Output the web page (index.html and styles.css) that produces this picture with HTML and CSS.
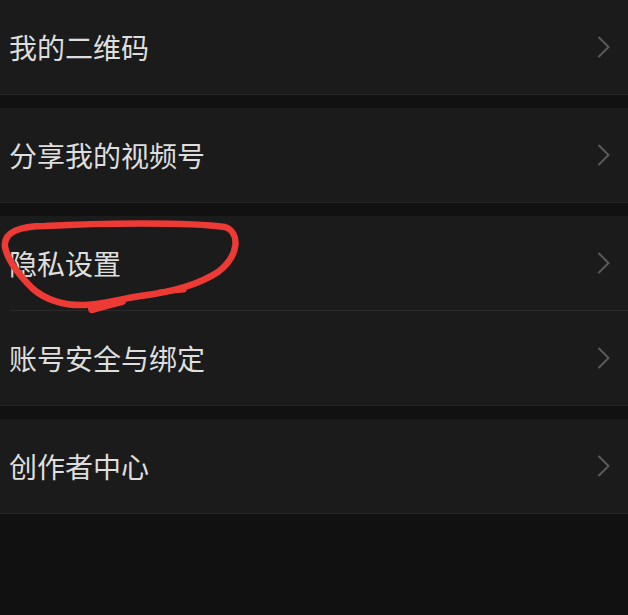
FILE: index.html
```html
<!DOCTYPE html>
<html lang="zh-CN">
<head>
<meta charset="utf-8">
<link rel="stylesheet" href="styles.css">
</head>
<body>
<div class="page">
  <div class="group">
    <div class="row"><span class="label">我的二维码</span><svg class="chev" width="14" height="22" viewBox="0 0 14 22"><path d="M2 1.5 L11.5 11 L2 20.5" /></svg></div>
  </div>
  <div class="group">
    <div class="row"><span class="label">分享我的视频号</span><svg class="chev" width="14" height="22" viewBox="0 0 14 22"><path d="M2 1.5 L11.5 11 L2 20.5" /></svg></div>
  </div>
  <div class="group">
    <div class="row"><span class="label">隐私设置</span><svg class="chev" width="14" height="22" viewBox="0 0 14 22"><path d="M2 1.5 L11.5 11 L2 20.5" /></svg></div>
    <div class="sep"></div>
    <div class="row"><span class="label">账号安全与绑定</span><svg class="chev" width="14" height="22" viewBox="0 0 14 22"><path d="M2 1.5 L11.5 11 L2 20.5" /></svg></div>
  </div>
  <div class="group">
    <div class="row"><span class="label">创作者中心</span><svg class="chev" width="14" height="22" viewBox="0 0 14 22"><path d="M2 1.5 L11.5 11 L2 20.5" /></svg></div>
  </div>
</div>
<svg class="mark" width="628" height="615" viewBox="0 0 628 615">
  <path d="M5 247 C3 232 20 226 45 226 C100 223 190 222 225 227 C240 232 240 255 218 272 C195 287 165 293 140 296 C120 299 105 304 85 305 C65 306 45 300 32 288 C20 276 8 262 5 247 Z" />
  <path d="M92 309 C100 307 110 304 122 301" class="thick" />
  <path d="M160 292 L184 290" class="thin" />
</svg>
</body>
</html>
```
FILE: styles.css
```css
html, body {
  margin: 0;
  padding: 0;
  background: #111111;
}
body {
  width: 628px;
  height: 615px;
  overflow: hidden;
  position: relative;
  font-family: "Noto Sans CJK SC", "Noto Sans", sans-serif;
}
.page {
  display: flex;
  flex-direction: column;
  gap: 13px;
}
.group {
  background: #1b1b1b;
  border-bottom: 1px solid #242424;
  display: flex;
  flex-direction: column;
}
.row {
  height: 94px;
  display: flex;
  align-items: center;
  justify-content: space-between;
  padding: 0 17px 0 9px;
}
.label {
  color: #dedede;
  font-size: 28px;
  line-height: 1;
}
.chev {
  display: block;
}
.chev path {
  fill: none;
  stroke: #5a5a5a;
  stroke-width: 2;
  stroke-linecap: round;
  stroke-linejoin: round;
}
.sep {
  height: 1px;
  margin-left: 10px;
  background: #2a2a2a;
}
.mark {
  position: absolute;
  left: 0;
  top: 0;
  pointer-events: none;
}
.mark path {
  fill: none;
  stroke: #ee3a35;
  stroke-width: 6.5;
  stroke-linecap: round;
  stroke-linejoin: round;
}
.mark .thick {
  stroke-width: 8;
}
.mark .thin {
  stroke-width: 5;
}
```
